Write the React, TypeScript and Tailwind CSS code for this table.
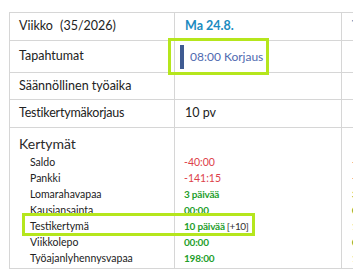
const kertymat = [
  { label: "Saldo", value: "-40:00", tone: "red" },
  { label: "Pankki", value: "-141:15", tone: "red" },
  { label: "Lomarahavapaa", value: "3 päivää", tone: "green" },
  { label: "Kausiansainta", value: "00:00", tone: "green" },
  { label: "Testikertymä", value: "10 päivää", extra: "[+10]", tone: "green" },
  { label: "Viikkolepo", value: "00:00", tone: "green" },
  { label: "Työajanlyhennysvapaa", value: "198:00", tone: "green" },
];

const next = ["-40:00", "-141:15", "3 päivää", "00:00", "10 päivää", "00:00", "198:00"];

export default function App() {
  return (
    <div className="w-[353px] h-[280px] overflow-hidden bg-white font-['Lato',sans-serif] text-[#222]">
      <div className="relative pt-[12px] pl-[9px]">
        <table className="border-collapse table-fixed w-[520px]">
          <colgroup>
            <col className="w-[165px]" />
            <col className="w-[167px]" />
            <col className="w-[188px]" />
          </colgroup>
          <tbody>
            <tr className="h-[28px]">
              <td className="border border-[#d6d6d6] px-[9px] text-[12.5px]">
                Viikko <span className="ml-1">(35/2026)</span>
              </td>
              <td className="border border-[#d6d6d6] px-[10px] text-[12.5px] font-bold text-[#1b8bbf]">Ma 24.8.</td>
              <td className="border border-[#d6d6d6] px-[10px] text-[12.5px] font-bold text-[#1b8bbf]">Ti 25.8.</td>
            </tr>
            <tr className="h-[32px]">
              <td className="border border-[#d6d6d6] px-[9px] text-[12.5px]">Tapahtumat</td>
              <td className="border border-[#d6d6d6] px-[5px]">
                <div className="flex items-center gap-[6px] h-[24px]">
                  <div className="w-[4px] h-[24px] bg-[#3f5b92]" />
                  <span className="text-[12px] text-[#4f6bb0]">08:00 Korjaus</span>
                </div>
              </td>
              <td className="border border-[#d6d6d6]" />
            </tr>
            <tr className="h-[27px]">
              <td className="border border-[#d6d6d6] px-[9px] text-[12.5px]">Säännöllinen työaika</td>
              <td className="border border-[#d6d6d6]" />
              <td className="border border-[#d6d6d6]" />
            </tr>
            <tr className="h-[28px]">
              <td className="border border-[#d6d6d6] px-[9px] text-[12.5px] tracking-[-0.2px]">Testikertymäkorjaus</td>
              <td className="border border-[#d6d6d6] px-[10px] text-[12.5px]">10 pv</td>
              <td className="border border-[#d6d6d6]" />
            </tr>
            <tr>
              <td className="border border-[#d6d6d6] px-[9px] pt-[6px] pb-[2px] align-top">
                <div className="text-[14px] leading-[20px] text-[#2a2a2a]">Kertymät</div>
                {kertymat.map((k) => (
                  <div key={k.label} className="pl-[11px] text-[10.5px] leading-[16px]">
                    {k.label}
                  </div>
                ))}
              </td>
              <td className="border border-[#d6d6d6] px-[9px] pt-[6px] pb-[2px] align-top">
                <div className="h-[20px]" />
                {kertymat.map((k) => (
                  <div
                    key={k.label}
                    className={
                      k.tone === "red"
                        ? "text-[10.5px] leading-[16px] text-[#dd3f4a]"
                        : "text-[10px] leading-[16px] font-bold tracking-[-0.2px] text-[#1e9e2c]"
                    }
                  >
                    {k.value}
                    {k.extra && (
                      <span className="ml-[2px] font-normal text-[10px] tracking-[-0.4px] text-[#333]">{k.extra}</span>
                    )}
                  </div>
                ))}
              </td>
              <td className="border border-[#d6d6d6] px-[10px] pt-[6px] pb-[2px] align-top">
                <div className="h-[20px]" />
                {next.map((v, i) => (
                  <div
                    key={i}
                    className={
                      i < 2
                        ? "text-[10.5px] leading-[16px] text-[#dd3f4a]"
                        : "text-[10px] leading-[16px] font-bold text-[#1e9e2c]"
                    }
                  >
                    {v}
                  </div>
                ))}
              </td>
            </tr>
          </tbody>
        </table>

        {/* highlight annotations */}
        <div className="absolute left-[168px] top-[38px] w-[101px] h-[37px] border-[3px] border-[#b5e61d]" />
        <div className="absolute left-[22px] top-[213px] w-[233px] h-[23px] border-[3px] border-[#b5e61d]" />
      </div>
    </div>
  );
}
